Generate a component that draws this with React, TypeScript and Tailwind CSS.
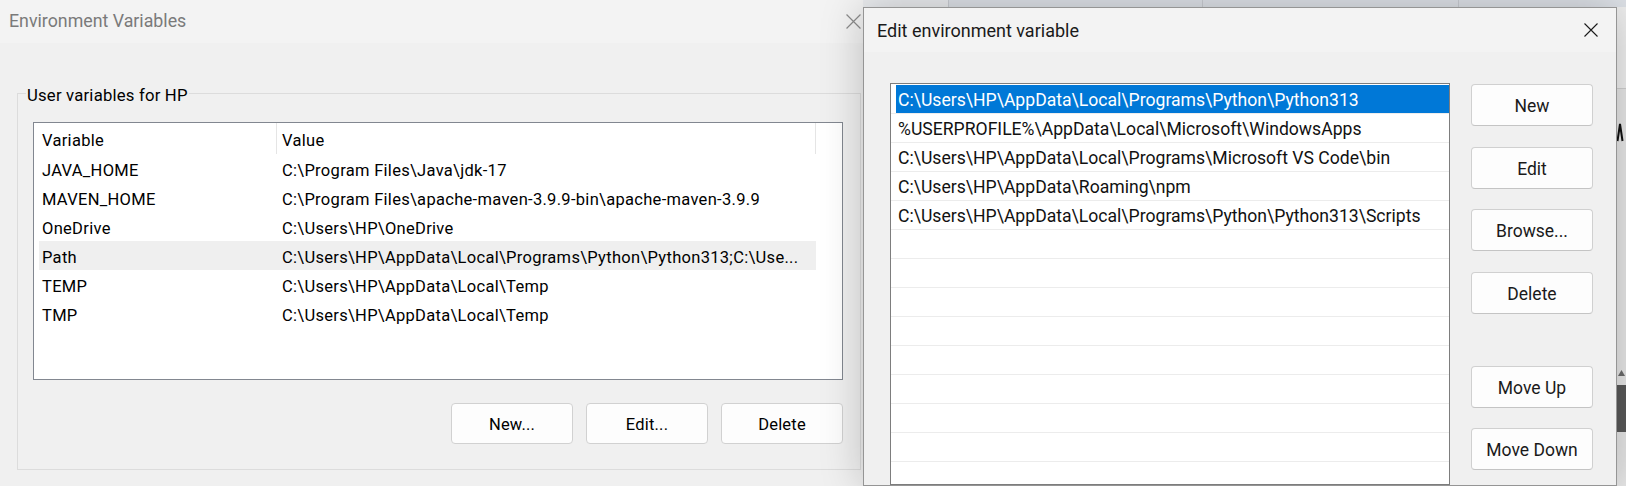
import React from 'react';

const userVars = [
  { name: 'JAVA_HOME', value: 'C:\\Program Files\\Java\\jdk-17' },
  { name: 'MAVEN_HOME', value: 'C:\\Program Files\\apache-maven-3.9.9-bin\\apache-maven-3.9.9' },
  { name: 'OneDrive', value: 'C:\\Users\\HP\\OneDrive' },
  { name: 'Path', value: 'C:\\Users\\HP\\AppData\\Local\\Programs\\Python\\Python313;C:\\Use...' },
  { name: 'TEMP', value: 'C:\\Users\\HP\\AppData\\Local\\Temp' },
  { name: 'TMP', value: 'C:\\Users\\HP\\AppData\\Local\\Temp' },
];

const pathEntries = [
  'C:\\Users\\HP\\AppData\\Local\\Programs\\Python\\Python313',
  '%USERPROFILE%\\AppData\\Local\\Microsoft\\WindowsApps',
  'C:\\Users\\HP\\AppData\\Local\\Programs\\Microsoft VS Code\\bin',
  'C:\\Users\\HP\\AppData\\Roaming\\npm',
  'C:\\Users\\HP\\AppData\\Local\\Programs\\Python\\Python313\\Scripts',
];

const CloseIcon = ({ size, color }: { size: number; color: string }) => (
  <svg width={size} height={size} viewBox="0 0 14 14" fill="none">
    <path d="M0.5 0.5 L13.5 13.5 M13.5 0.5 L0.5 13.5" stroke={color} strokeWidth="1.1" />
  </svg>
);

const LeftButton = ({ label }: { label: string }) => (
  <button className="w-[122px] h-[41px] pt-[4px] rounded-[4px] border border-[#d1d1d1] bg-[#fdfdfd] text-[16.5px] tracking-[0.2px] text-black">
    {label}
  </button>
);

const RightButton = ({ label, className }: { label: string; className: string }) => (
  <button
    className={`w-[122px] h-[42px] pt-[3px] rounded-[4px] border border-[#d0d0d0] border-b-[#c4c4c4] bg-[#fdfdfd] text-[17.5px] text-[#1a1a1a] ${className}`}
  >
    {label}
  </button>
);

function EnvironmentVariables() {
  return (
    <div className="w-[863px] shrink-0 h-full flex flex-col bg-[#f0f0f0]">
      <div className="h-[43px] shrink-0 bg-[#f3f3f3] flex items-center justify-between pl-[9px] pr-[2px]">
        <span className="text-[17.8px] text-[#7a7a7a]">Environment Variables</span>
        <CloseIcon size={15} color="#8c8c8c" />
      </div>

      <fieldset className="mt-[37px] ml-[17px] w-[844px] h-[390px] border border-[#dcdcdc]">
        <legend className="ml-[8px] px-[1px] pt-[6px] leading-[20px] text-[16.7px] tracking-[0.2px] text-black">
          User variables for HP
        </legend>

        <div className="mt-[16px] ml-[15px] w-[810px] h-[258px] border border-[#828790] bg-white">
          <div className="ml-[5px] w-[777px] text-[16.5px] tracking-[0.3px] text-black">
            <div className="flex h-[31px]">
              <div className="w-[237px] pl-[3px] pt-[4px] leading-[27px]">Variable</div>
              <div className="w-px h-full bg-[#e5e5e5]" />
              <div className="flex-1 pl-[5px] pt-[4px] leading-[27px]">Value</div>
              <div className="w-px h-full bg-[#e5e5e5]" />
            </div>
            {userVars.map((v) => (
              <div
                key={v.name}
                className={`flex h-[29px] pt-[5px] leading-[24px] ${v.name === 'Path' ? 'bg-[#efefef]' : ''}`}
              >
                <div className="w-[238px] pl-[3px] whitespace-nowrap">{v.name}</div>
                <div className="flex-1 pl-[5px] whitespace-nowrap">{v.value}</div>
              </div>
            ))}
          </div>
        </div>

        <div className="mt-[23px] mr-[17px] flex justify-end gap-[13px]">
          <LeftButton label="New..." />
          <LeftButton label="Edit..." />
          <LeftButton label="Delete" />
        </div>
      </fieldset>
    </div>
  );
}

function EditEnvironmentVariable() {
  const rows = Array.from({ length: 14 }, (_, i) => pathEntries[i] ?? '');
  return (
    <div className="relative z-10 w-[754px] shrink-0 flex flex-col border border-[#959595] bg-[#f0f0f0] shadow-[0_0_40px_rgba(0,0,0,0.22)]">
      <div className="h-[44px] shrink-0 bg-[#f3f3f3] flex items-center justify-between pl-[13px] pr-[18px]">
        <span className="text-[18px] text-[#1a1a1a]">Edit environment variable</span>
        <CloseIcon size={14} color="#1a1a1a" />
      </div>

      <div className="flex flex-1 min-h-0 pt-[31px]">
        <div className="ml-[26px] w-[560px] border border-[#7d7d7d] bg-white overflow-hidden pt-[1px]">
          {rows.map((entry, i) => (
            <div key={i} className="h-[29px] border-b border-[#ececec] text-[17.6px] whitespace-nowrap">
              {i === 0 ? (
                <div className="ml-[5px] h-[28px] bg-[#0078d7] pl-[2px] pt-[3px] leading-[25px] text-white">{entry}</div>
              ) : (
                <div className="h-[28px] pl-[7px] pt-[3px] leading-[25px] text-[#111]">{entry}</div>
              )}
            </div>
          ))}
        </div>

        <div className="ml-[21px] flex flex-col w-[122px]">
          <RightButton label="New" className="mt-[1px]" />
          <RightButton label="Edit" className="mt-[21px]" />
          <RightButton label="Browse..." className="mt-[20px]" />
          <RightButton label="Delete" className="mt-[21px]" />
          <RightButton label="Move Up" className="mt-[52px]" />
          <RightButton label="Move Down" className="mt-[20px]" />
        </div>
      </div>
    </div>
  );
}

function BackgroundEdge() {
  return (
    <div className="flex-1 flex flex-col bg-[#e6e6e6]">
      <div className="h-[81px] bg-[#efefef]" />
      <div className="h-px bg-[#cfcfcf]" />
      <div className="h-[34px]" />
      <svg width="9" height="19" viewBox="0 0 9 19">
        <path d="M0.5 18 L3 1 L5.5 18" stroke="#111" strokeWidth="2" fill="none" />
      </svg>
      <div className="h-[227px]" />
      <svg width="9" height="8" viewBox="0 0 9 8">
        <path d="M1 7 L4.5 1 L8 7 Z" fill="#6b6b6b" />
      </svg>
      <div className="h-[8px]" />
      <div className="h-[47px] bg-[#595959]" />
    </div>
  );
}

export default function App() {
  return (
    <div className="flex w-[1626px] h-[486px] overflow-hidden bg-[#f0f0f0] font-['Roboto',sans-serif]">
      <EnvironmentVariables />
      <div className="flex-1 flex flex-col bg-[#dde1e7]">
        <div className="h-[7px] shrink-0 flex">
          <div className="w-[85px] bg-[#e9ebee]" />
          <div className="w-px bg-[#c9ccd2]" />
          <div className="w-[253px]" />
          <div className="w-px bg-[#c9ccd2]" />
          <div className="w-[255px]" />
          <div className="w-px bg-[#c9ccd2]" />
        </div>
        <div className="flex flex-1 min-h-0">
          <EditEnvironmentVariable />
          <BackgroundEdge />
        </div>
      </div>
    </div>
  );
}
